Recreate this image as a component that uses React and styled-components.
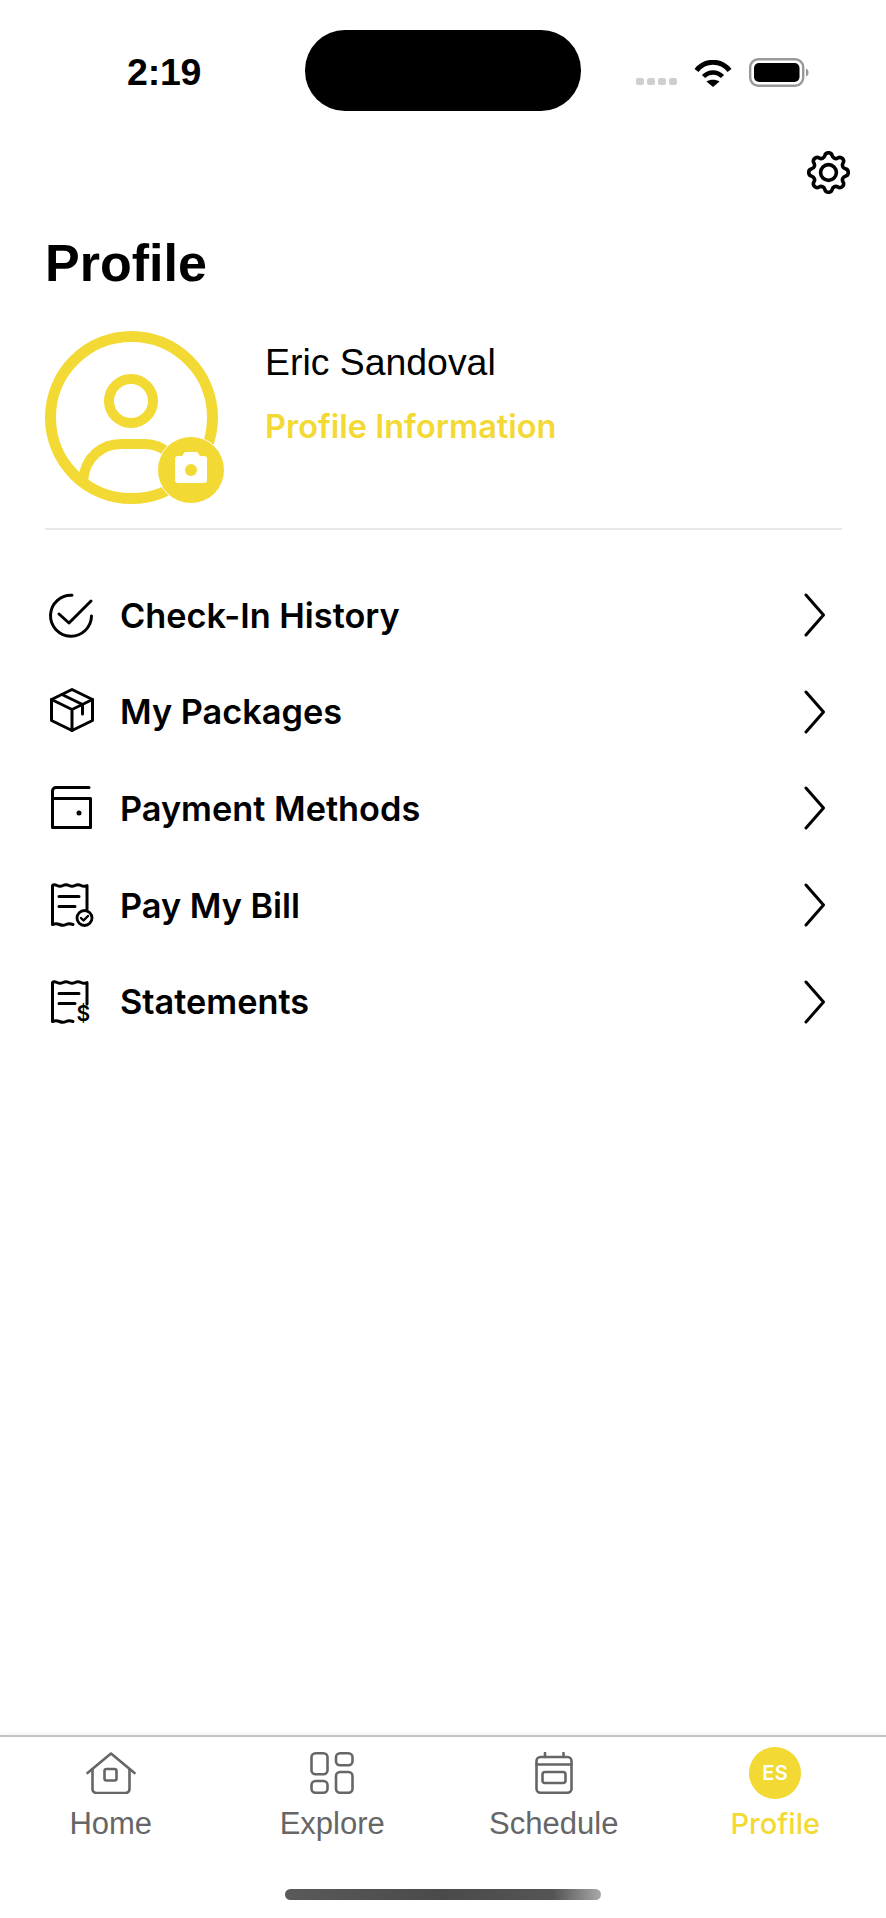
import React from 'react';
import styled, { createGlobalStyle } from 'styled-components';

const YELLOW = '#f3d934';
const GREY = '#666666';

const GlobalStyle = createGlobalStyle`
  html, body { margin: 0; padding: 0; background: #fff; }
  * { box-sizing: border-box; }
`;

const Page = styled.div`
  width: 886px;
  height: 1918px;
  display: flex;
  flex-direction: column;
  background: #fff;
  overflow: hidden;
  font-family: "Liberation Sans", Arial, sans-serif;
`;

const StatusBar = styled.div`
  display: grid;
  grid-template-columns: 305px 276px 1fr;
  align-items: center;
  height: 81px;
  margin-top: 30px;
`;

const Time = styled.div`
  padding-left: 127px;
  font-size: 37.5px;
  font-weight: 700;
  line-height: 44px;
  color: #000;
  margin-top: 3px;
  letter-spacing: -0.2px;
`;

const Island = styled.div`
  height: 81px;
  background: #000;
  border-radius: 40px;
`;

const StatusIcons = styled.div`
  display: flex;
  align-items: flex-end;
  padding-left: 55px;
  height: 29px;
  margin-top: 3px;
`;

const Signal = styled.div`
  display: flex;
  gap: 3px;
  margin-right: 17px;
  margin-bottom: 2px;
`;

const SignalDot = styled.span`
  width: 8px;
  height: 7px;
  border-radius: 2px;
  background: #cfcfcf;
`;

const WifiIcon = styled.svg`
  width: 38px;
  height: 27px;
  margin-right: 17px;
  display: block;
`;

const BatteryIcon = styled.svg`
  width: 60px;
  height: 29px;
  display: block;
`;

const TopBar = styled.div`
  display: flex;
  justify-content: flex-end;
  padding: 40px 36px 0 0;
`;

const GearIcon = styled.svg`
  width: 43px;
  height: 43px;
  display: block;
  fill: none;
  stroke: #000;
  stroke-width: 1.65;
  stroke-linejoin: round;
`;

const Title = styled.h1`
  margin: 39px 0 0;
  padding-left: 45px;
  font-size: 52px;
  line-height: 60px;
  font-weight: 700;
  color: #000;
`;

const ProfileHeader = styled.div`
  display: flex;
  margin: 38px 44px 0 45px;
  padding-bottom: 24px;
  border-bottom: 2px solid #e9e9e9;
`;

const AvatarIcon = styled.svg`
  width: 180px;
  height: 173px;
  display: block;
  flex: none;
`;

const ProfileInfo = styled.div`
  display: flex;
  flex-direction: column;
  padding: 9px 0 0 40px;
`;

const ProfileName = styled.div`
  font-size: 37.4px;
  line-height: 44px;
  color: #000;
`;

const ProfileLink = styled.div`
  margin-top: 22px;
  font-family: Inter, "Liberation Sans", sans-serif;
  font-size: 32.5px;
  line-height: 42px;
  font-weight: 600;
  color: ${YELLOW};
`;

const Menu = styled.div`
  display: flex;
  flex-direction: column;
  padding-top: 37px;
`;

const MenuRow = styled.div`
  display: flex;
  align-items: center;
  height: 96.6px;
  padding: 0 61px 0 48px;
`;

const MenuIconSlot = styled.div`
  width: 72px;
  flex: none;
  display: flex;
`;

const MenuLabel = styled.div`
  flex: 1;
  font-family: Inter, "Liberation Sans", sans-serif;
  font-size: 34.3px;
  font-weight: 600;
  color: #000;
`;

const LineIcon = styled.svg`
  width: ${p => p.$w}px;
  height: ${p => p.$h}px;
  margin-left: ${p => p.$ml || 0}px;
  margin-top: ${p => p.$mt || 0}px;
  display: block;
  fill: none;
  stroke: ${p => p.$color || '#000'};
  stroke-width: ${p => p.$sw || 3};
  stroke-linecap: round;
  stroke-linejoin: round;
`;

const TabBar = styled.div`
  margin-top: auto;
  border-top: 2px solid #c4c4c4;
  box-shadow: 0 -2px 3px rgba(0, 0, 0, 0.04);
  display: grid;
  grid-template-columns: repeat(4, 1fr);
  padding-top: 15px;
`;

const Tab = styled.div`
  display: flex;
  flex-direction: column;
  align-items: center;
  color: ${p => (p.$active ? YELLOW : GREY)};
`;

const TabIconSlot = styled.div`
  height: 42px;
  display: flex;
  align-items: center;
  justify-content: center;
`;

const InitialsBadge = styled.div`
  width: 52px;
  height: 52px;
  border-radius: 50%;
  background: ${YELLOW};
  color: #fff;
  display: flex;
  align-items: center;
  justify-content: center;
  font-family: Inter, "Liberation Sans", sans-serif;
  font-size: 20px;
  font-weight: 600;
  letter-spacing: 0.5px;
`;

const TabLabel = styled.div`
  margin-top: 11px;
  font-size: ${p => (p.$active ? 29 : 31)}px;
  line-height: 38px;
  font-family: ${p => (p.$active ? 'Inter, ' : '')}"Liberation Sans", sans-serif;
  font-weight: ${p => (p.$active ? 500 : 400)};
`;

const HomeIndicatorRow = styled.div`
  grid-column: 1 / -1;
  display: flex;
  justify-content: center;
  padding: 46px 0 18px;
`;

const HomeIndicator = styled.div`
  width: 316px;
  height: 11px;
  border-radius: 6px;
  background: linear-gradient(90deg, #5a5a5a 0%, #4a4a4a 50%, #555 85%, #a8a8a8 100%);
`;

const Wifi = () => (
  <WifiIcon viewBox="0 0 38 27">
    <path d="M2.5 10.5C11 -0.5 27 -0.5 35.5 10.5" fill="none" stroke="#000" strokeWidth="5" />
    <path d="M9.5 16.5C15 11 23 11 28.5 16.5" fill="none" stroke="#000" strokeWidth="4.5" />
    <path d="M12.5 21.5C16 19 22 19 25.5 21.5L19 27Z" fill="#000" />
  </WifiIcon>
);

const Battery = () => (
  <BatteryIcon viewBox="0 0 60 29">
    <rect x="1.2" y="1.2" width="53" height="26.6" rx="8" fill="none" stroke="#999" strokeWidth="2.4" />
    <rect x="5" y="5" width="45.5" height="19" rx="5" fill="#000" />
    <path d="M57 10.5C59 11.5 59.5 12.5 59.5 14.5C59.5 16.5 59 17.5 57 18.5Z" fill="#999" />
  </BatteryIcon>
);

const Gear = () => (
  <GearIcon viewBox="2.2 2.2 19.6 19.6">
    <path d="M10.325 4.317c.426 -1.756 2.924 -1.756 3.35 0a1.724 1.724 0 0 0 2.573 1.066c1.543 -.94 3.31 .826 2.37 2.37a1.724 1.724 0 0 0 1.065 2.572c1.756 .426 1.756 2.924 0 3.35a1.724 1.724 0 0 0 -1.066 2.573c.94 1.543 -.826 3.31 -2.37 2.37a1.724 1.724 0 0 0 -2.572 1.065c-.426 1.756 -2.924 1.756 -3.35 0a1.724 1.724 0 0 0 -2.573 -1.066c-1.543 .94 -3.31 -.826 -2.37 -2.37a1.724 1.724 0 0 0 -1.065 -2.572c-1.756 -.426 -1.756 -2.924 0 -3.35a1.724 1.724 0 0 0 1.066 -2.573c-.94 -1.543 .826 -3.31 2.37 -2.37c1 .608 2.296 .07 2.572 -1.065z" />
    <circle cx="12" cy="12" r="3.6" />
  </GearIcon>
);

const Avatar = () => (
  <AvatarIcon viewBox="0 0 180 173">
    <circle cx="86.5" cy="86.5" r="81" fill="none" stroke={YELLOW} strokeWidth="11" />
    <circle cx="86" cy="70" r="22" fill="none" stroke={YELLOW} strokeWidth="10" />
    <path d="M38 150C40 125 58 113 76 113H100C118 113 132 125 134 150" fill="none" stroke={YELLOW} strokeWidth="10" />
    <circle cx="146" cy="139" r="33.5" fill={YELLOW} stroke="#fff" strokeWidth="1" />
    <path d="M134 125H137L139 122C139.5 121 140 121 141 121H151C152 121 152.5 121 153 122L155 125H159C161 125 162 126 162 128V149C162 151 161 152 159 152H133C131 152 130 151 130 149V128C130 126 131 125 133 125Z" fill="#fff" />
    <circle cx="146" cy="139" r="6" fill={YELLOW} />
  </AvatarIcon>
);

const CheckCircle = () => (
  <LineIcon $w={46} $h={45} viewBox="0 0 46 45">
    <path d="M24 2.2A20.5 20.5 0 1 0 43.5 23" />
    <path d="M11 21L21 30L43 8" />
  </LineIcon>
);

const Box = () => (
  <LineIcon $w={46} $h={44} $ml={2} $mt={-4} viewBox="0 0 46 44">
    <path d="M22 1.5L42.5 11.5V32.5L22 42.5L1.5 32.5V11.5Z" />
    <path d="M1.5 11.5L22 21.5L42.5 11.5M22 21.5V42.5" />
    <path d="M12 6.5L32.5 16.5V26" />
  </LineIcon>
);

const Wallet = () => (
  <LineIcon $w={46} $h={44} $ml={3} viewBox="0 0 46 44">
    <path d="M38 1.5H5C3 1.5 1.5 3 1.5 5V41.5H39.5V12.5H1.5" />
    <circle cx="28" cy="27" r="1" fill="#000" />
  </LineIcon>
);

const Receipt = ({ children, tail }) => (
  <LineIcon $w={46} $h={48} $ml={3} viewBox="0 -2 46 48">
    <path d={`M36 ${tail}V2.5Q33 4 30 2.5T24 2.5T18 2.5T12 2.5T6 2.5T1.5 2.5V41.5Q5 40 8.5 41.5T15 41.5T22 41.5`} />
    <path d="M8 13.5H28M8 23.5H24" />
    {children}
  </LineIcon>
);

const PaidReceipt = () => (
  <Receipt tail={26}>
    <circle cx="33.5" cy="35" r="7.5" strokeWidth="2.8" />
    <path d="M30 35L32.5 37.5L37 33" strokeWidth="2.4" />
  </Receipt>
);

const DollarReceipt = () => (
  <Receipt tail={24}>
    <text x="25.5" y="41" fontFamily="Inter, Liberation Sans, sans-serif" fontSize="21" fontWeight="600" fill="#000" stroke="none">$</text>
  </Receipt>
);

const Chevron = () => (
  <LineIcon $w={21} $h={44} viewBox="0 0 21 44">
    <path d="M2 2L19.5 22L2 42" />
  </LineIcon>
);

const HomeTab = () => (
  <LineIcon $w={50} $h={42} $color={GREY} $sw={2.6} viewBox="0 0 50 42">
    <path d="M1.5 21L25 1.5L48.5 21" />
    <path d="M6.5 17V36.5C6.5 39.5 8 41 11 41H39C42 41 43.5 39.5 43.5 36.5V17" />
    <rect x="18.5" y="17" width="12" height="11.5" rx="2" />
  </LineIcon>
);

const ExploreTab = () => (
  <LineIcon $w={44} $h={42} $color={GREY} $sw={2.6} viewBox="0 0 44 42">
    <rect x="1.5" y="1.3" width="16" height="21" rx="4" />
    <rect x="26" y="1.3" width="16.5" height="12" rx="4" />
    <rect x="1.5" y="29" width="16" height="11.7" rx="4" />
    <rect x="26" y="20" width="16.5" height="20.7" rx="4" />
  </LineIcon>
);

const ScheduleTab = () => (
  <LineIcon $w={38} $h={42} $color={GREY} $sw={2.6} viewBox="0 0 38 42">
    <rect x="1.5" y="5" width="35" height="35.7" rx="4" />
    <path d="M1.5 12.5H36.5M10 1V5M28.5 1V5" />
    <rect x="7.5" y="20" width="23" height="11" rx="2.5" />
  </LineIcon>
);

const menuItems = [
  { label: 'Check-In History', icon: <CheckCircle /> },
  { label: 'My Packages', icon: <Box /> },
  { label: 'Payment Methods', icon: <Wallet /> },
  { label: 'Pay My Bill', icon: <PaidReceipt /> },
  { label: 'Statements', icon: <DollarReceipt /> },
];

const tabs = [
  { label: 'Home', icon: <HomeTab /> },
  { label: 'Explore', icon: <ExploreTab /> },
  { label: 'Schedule', icon: <ScheduleTab /> },
  { label: 'Profile', icon: <InitialsBadge>ES</InitialsBadge>, active: true },
];

const App = () => (
  <Page>
    <GlobalStyle />
    <StatusBar>
      <Time>2:19</Time>
      <Island />
      <StatusIcons>
        <Signal>
          <SignalDot />
          <SignalDot />
          <SignalDot />
          <SignalDot />
        </Signal>
        <Wifi />
        <Battery />
      </StatusIcons>
    </StatusBar>

    <TopBar>
      <Gear />
    </TopBar>

    <Title>Profile</Title>

    <ProfileHeader>
      <Avatar />
      <ProfileInfo>
        <ProfileName>Eric Sandoval</ProfileName>
        <ProfileLink>Profile Information</ProfileLink>
      </ProfileInfo>
    </ProfileHeader>

    <Menu>
      {menuItems.map(item => (
        <MenuRow key={item.label}>
          <MenuIconSlot>{item.icon}</MenuIconSlot>
          <MenuLabel>{item.label}</MenuLabel>
          <Chevron />
        </MenuRow>
      ))}
    </Menu>

    <TabBar>
      {tabs.map(tab => (
        <Tab key={tab.label} $active={tab.active}>
          <TabIconSlot>{tab.icon}</TabIconSlot>
          <TabLabel $active={tab.active}>{tab.label}</TabLabel>
        </Tab>
      ))}
      <HomeIndicatorRow>
        <HomeIndicator />
      </HomeIndicatorRow>
    </TabBar>
  </Page>
);

export default App;
